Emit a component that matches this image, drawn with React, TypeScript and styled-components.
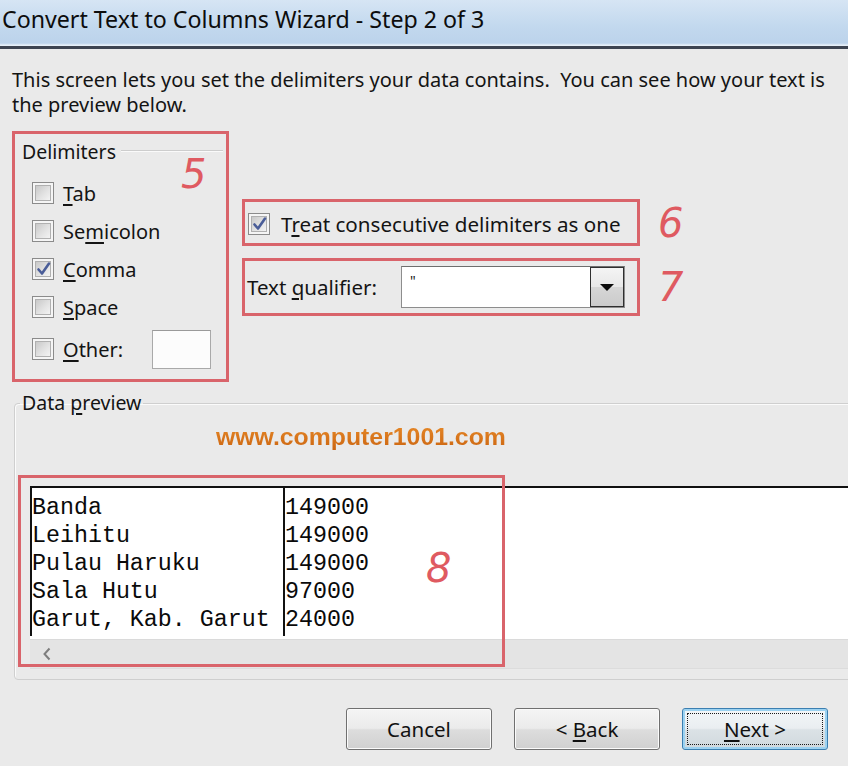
import React from "react";
import styled, { createGlobalStyle } from "styled-components";

const Global = createGlobalStyle`
  html, body { margin: 0; padding: 0; background: #eaeaea; }
  body { font-family: "Noto Sans", "Open Sans", sans-serif; color: #141414; }
  * { box-sizing: border-box; }
`;

const Window = styled.div`
  width: 848px;
  height: 766px;
  overflow: hidden;
  background: #eaeaea;
  display: flex;
  flex-direction: column;
`;

const TitleBar = styled.div`
  flex: none;
  height: 49px;
  padding-left: 2px;
  display: flex;
  align-items: center;
  padding-bottom: 11px;
  font-size: 23.2px;
  white-space: nowrap;
  color: #0d0d0d;
  background: linear-gradient(to bottom, #d6e5f4 0%, #c2d8ee 55%, #bcd3eb 88%, #e6eff8 92%, #e6eff8 93%, #3d4451 94%, #3d4451 100%);
`;

const Content = styled.div`
  flex: 1;
  display: flex;
  flex-direction: column;
  padding-left: 12px;
`;

const Description = styled.p`
  margin: 18px 0 0;
  font-size: 20px;
  line-height: 25px;
  white-space: pre;
`;

const Middle = styled.div`
  margin-top: 14px;
  display: flex;
  align-items: flex-start;
`;

const RedFrame = styled.div<{ $w: number; $h: number }>`
  position: relative;
  width: ${(p) => p.$w}px;
  height: ${(p) => p.$h}px;
  border: 3px solid #d9646b;
  flex: none;
`;

const Note = styled.span<{ $size?: number }>`
  font-family: "DejaVu Sans", sans-serif;
  font-style: italic;
  font-weight: 300;
  font-size: ${(p) => p.$size ?? 40}px;
  line-height: 1;
  color: #df5a61;
`;

const FloatNote = styled(Note)<{ $l: number; $t: number }>`
  position: absolute;
  left: ${(p) => p.$l}px;
  top: ${(p) => p.$t}px;
`;

const DelimInner = styled.div`
  padding: 5px 3px 0 7px;
  display: flex;
  flex-direction: column;
`;

const LegendRow = styled.div`
  display: flex;
  align-items: center;
  height: 24px;
  font-size: 19.5px;
`;

const LegendLine = styled.div`
  flex: 1;
  height: 2px;
  margin-left: 5px;
  border-top: 1px solid #cdcdcd;
  border-bottom: 1px solid #fafafa;
`;

const CheckList = styled.div`
  margin-top: 11px;
  padding-left: 10px;
  display: flex;
  flex-direction: column;
`;

const CheckRow = styled.div<{ $h?: number }>`
  height: ${(p) => p.$h ?? 38}px;
  display: flex;
  align-items: center;
  gap: 9px;
  font-size: 20px;
  white-space: nowrap;
`;

const BoxOuter = styled.span`
  position: relative;
  flex: none;
  width: 22px;
  height: 22px;
  border: 1px solid #8b8b8b;
  background: #f5f5f5;
  &::before {
    content: "";
    position: absolute;
    inset: 2px;
    border: 1px solid #b0b0b0;
    background: linear-gradient(135deg, #c9c9c9 0%, #e2e2e2 55%, #f3f3f3 100%);
  }
`;

const CheckSvg = styled.svg`
  position: absolute;
  left: 2px;
  top: 1px;
  width: 17px;
  height: 18px;
`;

const Key = styled.span`
  text-decoration: underline;
  text-underline-offset: 3px;
  text-decoration-thickness: 1.5px;
`;

const OtherInput = styled.div`
  margin-left: auto;
  margin-right: 12px;
  width: 59px;
  height: 39px;
  background: #fcfcfc;
  border: 1px solid #a9a9a9;
  border-top-color: #9a9a9a;
`;

const RightCol = styled.div`
  margin-left: 13px;
  display: flex;
  flex-direction: column;
`;

const NoteRow = styled.div<{ $mt: number }>`
  margin-top: ${(p) => p.$mt}px;
  display: flex;
  align-items: center;
  gap: 18px;
`;

const TreatInner = styled.div`
  height: 100%;
  display: flex;
  align-items: center;
  gap: 11px;
  padding: 3px 0 0 3px;
  font-size: 20.6px;
  white-space: nowrap;
`;

const QualInner = styled.div`
  height: 100%;
  display: flex;
  align-items: center;
  padding-left: 2px;
  font-size: 20.5px;
  white-space: nowrap;
`;

const Combo = styled.div`
  margin-left: auto;
  margin-right: 12px;
  width: 224px;
  height: 42px;
  display: flex;
  background: #ffffff;
  border: 1px solid #8d8d8d;
  border-top-color: #6e6e6e;
`;

const ComboText = styled.span`
  padding: 7px 0 0 8px;
  font-size: 14px;
  line-height: 1;
`;

const DropButton = styled.div`
  margin-left: auto;
  width: 34px;
  height: 100%;
  display: flex;
  align-items: center;
  justify-content: center;
  border: 1px solid #2f2f2f;
  background: linear-gradient(to bottom, #f4f4f4 0%, #e8e8e8 50%, #d6d6d6 51%, #cbcbcb 100%);
  &::after {
    content: "";
    border-left: 7px solid transparent;
    border-right: 7px solid transparent;
    border-top: 7px solid #0c0c0c;
  }
`;

const Group = styled.fieldset`
  margin: 9px 0 0 2px;
  padding: 0 0 10px 0;
  width: 900px;
  min-width: 0;
  border: 1px solid #cfcfcf;
  border-radius: 4px;
  box-shadow: inset 1px 1px 0 #fbfbfb;
`;

const GroupLegend = styled.legend`
  margin-left: 5px;
  padding: 0 2px;
  font-size: 19.5px;
  line-height: 24px;
`;

const Watermark = styled.div`
  margin-top: 7px;
  padding-left: 201px;
  font-family: "Liberation Sans", Arial, sans-serif;
  font-weight: 700;
  font-size: 24.8px;
  line-height: 30px;
  color: #dc7418;
  background: linear-gradient(to bottom, #e98c2a, #c9620f);
  -webkit-background-clip: text;
  background-clip: text;
  -webkit-text-fill-color: transparent;
  width: max-content;
`;

const PreviewWrap = styled.div`
  position: relative;
  margin: 34px 0 0 15px;
`;

const Preview = styled.div`
  background: #ffffff;
  border-top: 2px solid #111;
  padding-bottom: 3px;
  display: flex;
`;

const PreviewCol = styled.div<{ $w?: number }>`
  ${(p) => (p.$w ? `width: ${p.$w}px; flex: none;` : "flex: 1;")}
  border-left: 2px solid #111;
  padding-top: 6px;
  padding-bottom: 2px;
  font-family: "Liberation Mono", "Courier New", monospace;
  font-size: 23.3px;
  line-height: 28px;
  color: #0a0a0a;
  white-space: pre;
`;

const Cell = styled.div`
  height: 28px;
`;

const ScrollBar = styled.div`
  height: 30px;
  background: #e4e4e4;
  border-top: 1px solid #dadada;
  border-bottom: 1px solid #dcdcdc;
  display: flex;
  align-items: center;
  padding-left: 12px;
`;

const Annot = styled.div`
  position: absolute;
  left: -12px;
  top: -11px;
  width: 487px;
  height: 192px;
  border: 3px solid #d9646b;
  pointer-events: none;
`;

const Buttons = styled.div`
  margin-top: 28px;
  padding-right: 20px;
  display: flex;
  justify-content: flex-end;
  gap: 22px;
`;

const Button = styled.div<{ $default?: boolean }>`
  position: relative;
  width: 146px;
  height: 42px;
  display: flex;
  align-items: center;
  justify-content: center;
  font-size: 20.5px;
  color: #111;
  border-radius: 3px;
  border: 1px solid ${(p) => (p.$default ? "#3c7fb1" : "#707070")};
  background: ${(p) =>
    p.$default
      ? "linear-gradient(to bottom, #f3f6f8 0%, #eaeef1 48%, #dbe2e6 52%, #d0d8dd 100%)"
      : "linear-gradient(to bottom, #f4f4f4 0%, #ebebeb 48%, #dddddd 52%, #d0d0d0 100%)"};
  box-shadow: ${(p) => (p.$default ? "inset 0 0 0 2px #9cd2f1" : "inset 0 0 0 1px #fbfbfb")};
  ${(p) =>
    p.$default &&
    `&::after { content: ""; position: absolute; inset: 4px; border: 1px dotted #1a1a1a; }`}
`;

const Check = ({ on }: { on?: boolean }) => (
  <BoxOuter>
    {on && (
      <CheckSvg viewBox="0 0 17 18">
        <path d="M3.5 9.5 L7 13.5 L14 3.5" fill="none" stroke="#4a5d98" strokeWidth="2.6" strokeLinecap="round" strokeLinejoin="round" />
      </CheckSvg>
    )}
  </BoxOuter>
);

const rows: [string, string][] = [
  ["Banda", "149000"],
  ["Leihitu", "149000"],
  ["Pulau Haruku", "149000"],
  ["Sala Hutu", "97000"],
  ["Garut, Kab. Garut", "24000"],
];

export default function App() {
  return (
    <Window>
      <Global />
      <TitleBar>Convert Text to Columns Wizard - Step 2 of 3</TitleBar>
      <Content>
        <Description>
          {"This screen lets you set the delimiters your data contains.  You can see how your text is\nthe preview below."}
        </Description>
        <Middle>
          <RedFrame $w={217} $h={251}>
            <DelimInner>
              <LegendRow>
                Delimiters
                <LegendLine />
              </LegendRow>
              <CheckList>
                <CheckRow>
                  <Check />
                  <span>
                    <Key>T</Key>ab
                  </span>
                </CheckRow>
                <CheckRow>
                  <Check />
                  <span>
                    Se<Key>m</Key>icolon
                  </span>
                </CheckRow>
                <CheckRow>
                  <Check on />
                  <span>
                    <Key>C</Key>omma
                  </span>
                </CheckRow>
                <CheckRow>
                  <Check />
                  <span>
                    <Key>S</Key>pace
                  </span>
                </CheckRow>
                <CheckRow $h={46}>
                  <Check />
                  <span>
                    <Key>O</Key>ther:
                  </span>
                  <OtherInput />
                </CheckRow>
              </CheckList>
            </DelimInner>
            <FloatNote $l={166} $t={20}>5</FloatNote>
          </RedFrame>
          <RightCol>
            <NoteRow $mt={68}>
              <RedFrame $w={398} $h={47}>
                <TreatInner>
                  <Check on />
                  <span>
                    T<Key>r</Key>eat consecutive delimiters as one
                  </span>
                </TreatInner>
              </RedFrame>
              <Note>6</Note>
            </NoteRow>
            <NoteRow $mt={12}>
              <RedFrame $w={398} $h={58}>
                <QualInner>
                  <span>
                    Text <Key>q</Key>ualifier:
                  </span>
                  <Combo>
                    <ComboText>"</ComboText>
                    <DropButton />
                  </Combo>
                </QualInner>
              </RedFrame>
              <Note>7</Note>
            </NoteRow>
          </RightCol>
        </Middle>
        <Group>
          <GroupLegend>
            Data <Key>p</Key>review
          </GroupLegend>
          <Watermark>www.computer1001.com</Watermark>
          <PreviewWrap>
            <Preview>
              <PreviewCol $w={253}>
                {rows.map((r) => (
                  <Cell key={r[0]}>{r[0]}</Cell>
                ))}
              </PreviewCol>
              <PreviewCol>
                {rows.map((r) => (
                  <Cell key={r[0]}>{r[1]}</Cell>
                ))}
              </PreviewCol>
            </Preview>
            <ScrollBar>
              <svg width="10" height="14" viewBox="0 0 10 14">
                <path d="M7.5 1.5 L2.5 7 L7.5 12.5" fill="none" stroke="#7d7d7d" strokeWidth="2" />
              </svg>
            </ScrollBar>
            <Annot>
              <FloatNote $l={405} $t={70}>8</FloatNote>
            </Annot>
          </PreviewWrap>
        </Group>
        <Buttons>
          <Button>Cancel</Button>
          <Button>
            <span>
              &lt; <Key>B</Key>ack
            </span>
          </Button>
          <Button $default>
            <span>
              <Key>N</Key>ext &gt;
            </span>
          </Button>
        </Buttons>
      </Content>
    </Window>
  );
}
